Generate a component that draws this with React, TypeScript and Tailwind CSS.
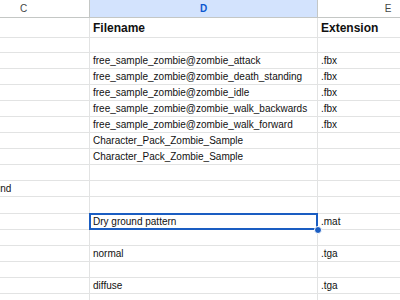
import React from "react";

type Row = {
  c?: string;
  d?: string;
  e?: string;
  h?: string;
  bold?: boolean;
  selected?: boolean;
};

const rows: Row[] = [
  { d: "Filename", e: "Extension", bold: true, h: "h-[19px]" },
  {},
  { d: "free_sample_zombie@zombie_attack", e: ".fbx" },
  { d: "free_sample_zombie@zombie_death_standing", e: ".fbx" },
  { d: "free_sample_zombie@zombie_idle", e: ".fbx" },
  { d: "free_sample_zombie@zombie_walk_backwards", e: ".fbx" },
  { d: "free_sample_zombie@zombie_walk_forward", e: ".fbx" },
  { d: "Character_Pack_Zombie_Sample" },
  { d: "Character_Pack_Zombie_Sample" },
  {},
  { c: "Ground" },
  { h: "h-[17px]" },
  { d: "Dry ground pattern", e: ".mat", selected: true },
  {},
  { d: "normal", e: ".tga" },
  {},
  { d: "diffuse", e: ".tga" },
  {},
];

const cols = "grid grid-cols-[132px_228px_140px]";

function Cell({
  text,
  bold,
  selected,
  className = "",
}: {
  text?: string;
  bold?: boolean;
  selected?: boolean;
  className?: string;
}) {
  return (
    <div
      className={`relative flex items-center border-r border-b border-[#e2e3e3] px-[3px] whitespace-nowrap ${
        bold ? "text-[12px] font-bold pt-[1px]" : "text-[10px]"
      } ${selected ? "z-30" : ""} ${className}`}
    >
      {text}
      {selected && (
        <>
          {/* active cell outline + fill handle */}
          <div className="absolute left-[-1px] top-[-1px] right-[-1px] bottom-[-1px] border-2 border-[#1a5dc2] pointer-events-none" />
          <div className="absolute right-[-5px] bottom-[-5px] w-[8px] h-[8px] rounded-full bg-[#1a5dc2] border border-white" />
        </>
      )}
    </div>
  );
}

export default function App() {
  return (
    <div
      className="w-[400px] h-[300px] overflow-hidden bg-white text-[#111]"
      style={{ fontFamily: '"Liberation Sans", Arial, sans-serif' }}
    >
      <div className="ml-[-42px] w-[500px]">
        {/* Column headers */}
        <div className={`${cols} h-[18px] border-b border-[#c4c7c5] text-[10px]`}>
          <div className="flex items-center justify-center border-r border-[#c4c7c5] text-[#444746]">C</div>
          <div className="flex items-center justify-center border-r border-[#c4c7c5] bg-[#d3e3fd] font-bold text-[#0b57d0]">
            D
          </div>
          <div className="flex items-center justify-center text-[#444746]">E</div>
        </div>

        {rows.map((r, i) => (
          <div key={i} className={`${cols} ${r.h ?? "h-[16px]"}`}>
            <Cell text={r.c} className="pl-[20px]" />
            <Cell text={r.d} bold={r.bold} selected={r.selected} />
            <Cell text={r.e} bold={r.bold} />
          </div>
        ))}
      </div>
    </div>
  );
}
